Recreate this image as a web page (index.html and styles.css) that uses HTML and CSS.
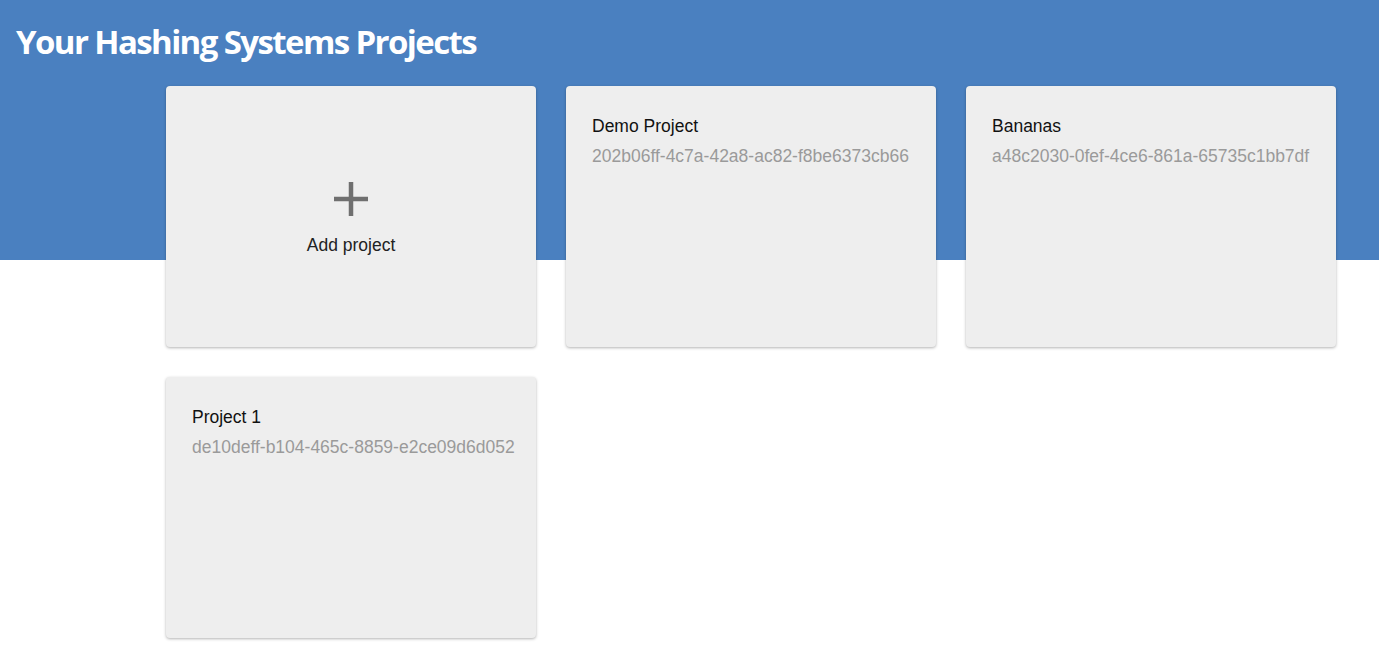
FILE: index.html
```html
<!DOCTYPE html>
<html>
<head>
<meta charset="utf-8">
<link rel="stylesheet" href="styles.css">
</head>
<body>
<div class="page">
  <h1 class="title">Your Hashing Systems Projects</h1>
  <div class="grid">
    <div class="card add">
      <svg class="plus" width="38" height="38" viewBox="0 0 38 38"><path d="M19 2v34M2 19h34" stroke="#6f6f6f" stroke-width="4.5" fill="none"/></svg>
      <div class="add-label">Add project</div>
    </div>
    <div class="card">
      <div class="name">Demo Project</div>
      <div class="uuid">202b06ff-4c7a-42a8-ac82-f8be6373cb66</div>
    </div>
    <div class="card">
      <div class="name">Bananas</div>
      <div class="uuid">a48c2030-0fef-4ce6-861a-65735c1bb7df</div>
    </div>
    <div class="card">
      <div class="name">Project 1</div>
      <div class="uuid">de10deff-b104-465c-8859-e2ce09d6d052</div>
    </div>
  </div>
</div>
</body>
</html>
```
FILE: styles.css
```css
html, body { margin: 0; padding: 0; }
body {
  background: linear-gradient(#4a80c0 0, #4a80c0 260px, #ffffff 260px);
  font-family: "Liberation Sans", Arial, sans-serif;
  min-height: 659px;
}
.page { padding: 0; }
.title {
  margin: 0;
  padding: 20px 0 0 16px;
  height: 86px;
  box-sizing: border-box;
  font-family: "Open Sans", sans-serif;
  font-weight: 700;
  font-size: 33px;
  letter-spacing: -1.6px;
  line-height: 44px;
  color: #fff;
}
.grid {
  display: grid;
  grid-template-columns: repeat(3, 370px);
  grid-auto-rows: 261px;
  gap: 30px;
  padding-left: 166px;
}
.card {
  background: #eeeeee;
  border-radius: 4px;
  box-shadow: 0 1px 3px rgba(0,0,0,0.3);
  padding: 30px 12px 30px 26px;
  box-sizing: border-box;
}
.card.add {
  display: flex;
  flex-direction: column;
  align-items: center;
  justify-content: center;
  padding: 0;
}
.plus { display: block; margin-top: 2px; }
.add-label { font-size: 17.5px; color: #222; margin-top: 17px; }
.name { font-size: 17.5px; color: #111; line-height: 20px; }
.uuid { font-size: 17.5px; color: #9a9a9a; line-height: 20px; margin-top: 10px; white-space: nowrap; }
```
